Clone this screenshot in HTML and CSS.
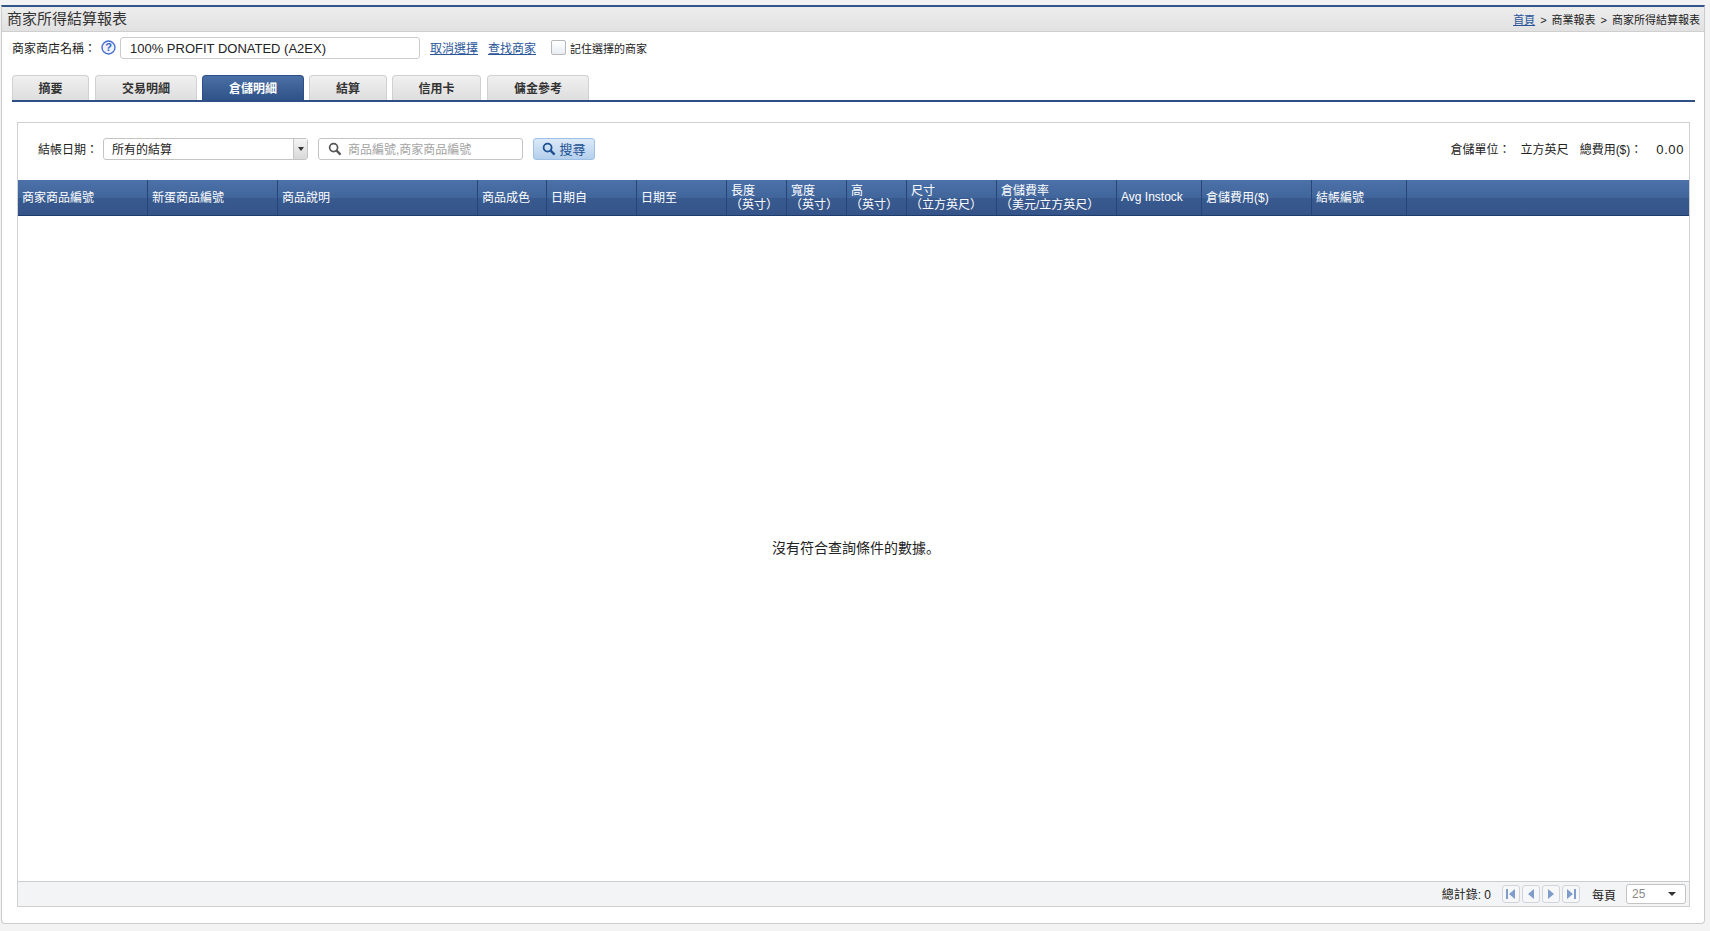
FILE: index.html
```html
<!DOCTYPE html>
<html>
<head>
    <meta charset="utf-8">
    <title>商家所得結算報表</title>
    <link rel="stylesheet" href="styles.css">
</head>
<body>
    <div class="panel">
        <div class="title-bar">
            <h1>商家所得結算報表</h1>
            <div class="crumbs"><a href="#">首頁</a><span>&gt;</span>商業報表<span>&gt;</span>商家所得結算報表</div>
        </div>

        <div class="seller-row">
            <label class="seller-label">商家商店名稱：</label>
            <svg class="help" width="15" height="15" viewBox="0 0 15 15">
                <circle cx="7.5" cy="7.5" r="6.5" fill="#eef2fb" stroke="#4a6fd0" stroke-width="1.4"/>
                <text x="7.5" y="11" text-anchor="middle" class="help-mark">?</text>
            </svg>
            <input class="seller-input" type="text" value="100% PROFIT DONATED (A2EX)">
            <a class="seller-link first" href="#">取消選擇</a>
            <a class="seller-link" href="#">查找商家</a>
            <span class="check"></span>
            <span class="check-label">記住選擇的商家</span>
        </div>

        <div class="tabs">
            <div class="tab tab1">摘要</div>
            <div class="tab tab2">交易明細</div>
            <div class="tab tab3 active">倉儲明細</div>
            <div class="tab tab4">結算</div>
            <div class="tab tab5">信用卡</div>
            <div class="tab tab6">傭金參考</div>
        </div>

        <div class="grid-box">
            <div class="filter-row">
                <label class="filter-label">結帳日期：</label>
                <div class="select">
                    <span class="select-text">所有的結算</span>
                    <span class="select-btn"><i></i></span>
                </div>
                <div class="search-box">
                    <svg width="14" height="14" viewBox="0 0 14 14">
                        <circle cx="5.6" cy="5.6" r="4" fill="none" stroke="#555" stroke-width="1.7"/>
                        <path d="M8.6 8.6 L12.6 12.6" stroke="#555" stroke-width="2.2"/>
                    </svg>
                    <input type="text" placeholder="商品編號,商家商品編號">
                </div>
                <button class="search-btn">
                    <svg width="14" height="14" viewBox="0 0 14 14">
                        <circle cx="5.6" cy="5.6" r="4" fill="none" stroke="#1d4f91" stroke-width="1.8"/>
                        <path d="M8.6 8.6 L12.6 12.6" stroke="#1d4f91" stroke-width="2.3"/>
                    </svg>
                    搜尋
                </button>
                <div class="totals">
                    <span>倉儲單位：</span><span class="unit">立方英尺</span><span class="fee">總費用($)：</span><span class="amount">0.00</span>
                </div>
            </div>

            <div class="grid-head">
                <div class="col w130">商家商品編號</div>
                <div class="col w130">新蛋商品編號</div>
                <div class="col w200">商品說明</div>
                <div class="col w69">商品成色</div>
                <div class="col w90">日期自</div>
                <div class="col w90">日期至</div>
                <div class="col w60 two">長度<br><b>（英寸）</b></div>
                <div class="col w60 two">寬度<br><b>（英寸）</b></div>
                <div class="col w60 two">高<br><b>（英寸）</b></div>
                <div class="col w90 two">尺寸<br><b>（立方英尺）</b></div>
                <div class="col w120 two">倉儲費率<br><b>（美元/立方英尺）</b></div>
                <div class="col w85">Avg Instock</div>
                <div class="col w110">倉儲費用($)</div>
                <div class="col w95">結帳編號</div>
            </div>

            <div class="grid-body"><span>沒有符合查詢條件的數據<span class="stop">。</span></span></div>

            <div class="grid-foot">
                <span class="count">總計錄: 0</span>
                <span class="page-btn"><svg width="12" height="12" viewBox="0 0 12 12"><path d="M1 1h2v10H1zM10 1v10L4 6z"/></svg></span>
                <span class="page-btn"><svg width="12" height="12" viewBox="0 0 12 12"><path d="M9 1v10L3 6z"/></svg></span>
                <span class="page-btn"><svg width="12" height="12" viewBox="0 0 12 12"><path d="M3 1v10l6-5z"/></svg></span>
                <span class="page-btn"><svg width="12" height="12" viewBox="0 0 12 12"><path d="M2 1v10l6-5zM9 1h2v10H9z"/></svg></span>
                <span class="per-page">每頁</span>
                <div class="page-size"><span>25</span><i></i></div>
            </div>
        </div>
    </div>
</body>
</html>
```

FILE: styles.css
```css
html, body {
    height: 100%;
}

body {
    margin: 0;
    padding: 5px 5px 7px 1px;
    box-sizing: border-box;
    background-color: #f3f3f3;
    font-family: "Liberation Sans", "Noto Sans CJK TC", sans-serif;
    font-size: 12px;
    color: #222;
}

a {
    color: #2a5699;
}

.panel {
    height: 100%;
    box-sizing: border-box;
    display: flex;
    flex-direction: column;
    background-color: #fff;
    border: 1px solid #ccc;
    border-top: 2px solid #34558a;
    border-radius: 0 0 4px 4px;
}

.title-bar {
    height: 24px;
    flex: none;
    display: flex;
    align-items: center;
    justify-content: space-between;
    padding: 0 4px 0 5px;
    background: linear-gradient(#ededed, #e1e1e1);
    border-bottom: 1px solid #cfcfcf;
}

h1 {
    margin: 0 0 4px;
    font-size: 15px;
    font-weight: normal;
    color: #333;
}

.crumbs {
    margin-bottom: 1px;
    font-size: 11px;
}

.crumbs span {
    margin: 0 5px;
}

.seller-row {
    height: 31px;
    flex: none;
    display: flex;
    align-items: center;
    padding-left: 10px;
}

.seller-label {
    width: 88px;
}

.help {
    margin-left: 1px;
}

.help-mark {
    font-size: 11px;
    font-weight: bold;
    fill: #3d62c4;
}

.seller-input {
    width: 300px;
    height: 22px;
    box-sizing: border-box;
    margin-left: 4px;
    padding: 2px 9px 0;
    border: 1px solid #ccc;
    border-radius: 3px;
    font-family: inherit;
    font-size: 13px;
    color: #222;
}

.seller-link {
    margin-left: 10px;
}

.check {
    width: 13px;
    height: 13px;
    margin-left: 15px;
    border: 1px solid #b8b8b8;
    border-radius: 2px;
    background: linear-gradient(#fff, #e8edf2);
}

.check-label {
    margin-left: 4px;
    font-size: 11px;
}

.tabs {
    flex: none;
    height: 25px;
    margin: 12px 9px 0 10px;
    display: flex;
    align-items: flex-end;
    border-bottom: 2px solid #2d4f85;
}

.tab {
    height: 25px;
    box-sizing: border-box;
    padding-bottom: 1px;
    display: flex;
    align-items: center;
    justify-content: center;
    border: 1px solid #d0d0d0;
    border-bottom: none;
    border-radius: 4px 4px 0 0;
    background: linear-gradient(#f0f0f0, #dedede);
    font-size: 12px;
    font-weight: bold;
    color: #333;
}

.tab1 { width: 77px; margin-right: 6px; }
.tab2 { width: 102px; margin-right: 5px; }
.tab3 { width: 102px; margin-right: 5px; }
.tab4 { width: 78px; margin-right: 5px; }
.tab5 { width: 89px; margin-right: 6px; }
.tab6 { width: 102px; }

.tab.active {
    border-color: #2d4f85;
    background: linear-gradient(#4a70a6, #2f5288);
    color: #fff;
}

.grid-box {
    flex: 1;
    min-height: 0;
    margin: 20px 14px 16px 15px;
    display: flex;
    flex-direction: column;
    border: 1px solid #d0d0d0;
}

.filter-row {
    height: 57px;
    flex: none;
    box-sizing: border-box;
    display: flex;
    align-items: center;
    padding: 0 0 6px 20px;
}

.filter-label {
    width: 65px;
}

.select {
    width: 205px;
    height: 22px;
    box-sizing: border-box;
    display: flex;
    border: 1px solid #c4c4c4;
    border-radius: 3px;
}

.select-text {
    flex: 1;
    padding-left: 8px;
    line-height: 22px;
}

.select-btn {
    width: 13px;
    display: flex;
    align-items: center;
    justify-content: center;
    border-left: 1px solid #c4c4c4;
    background: linear-gradient(#f4f4f4, #d8d8d8);
}

.select-btn i {
    border-style: solid;
    border-width: 4px 3px 0 3px;
    border-color: #333 transparent transparent transparent;
}

.search-box {
    width: 205px;
    height: 22px;
    box-sizing: border-box;
    margin-left: 10px;
    padding-left: 9px;
    display: flex;
    align-items: center;
    border: 1px solid #c4c4c4;
    border-radius: 3px;
}

.search-box input {
    flex: 1;
    min-width: 0;
    margin-left: 6px;
    padding: 2px 0 0;
    border: none;
    outline: none;
    font-family: inherit;
    font-size: 12px;
}

.search-box input::placeholder {
    color: #a3a3a3;
}

.search-btn {
    width: 62px;
    height: 22px;
    margin-left: 10px;
    padding: 0;
    display: flex;
    align-items: center;
    justify-content: center;
    gap: 3px;
    border: 1px solid #9dc0e6;
    border-radius: 3px;
    background: linear-gradient(#dbe9f8, #b4cfec);
    font-family: inherit;
    font-size: 13px;
    color: #1d4f91;
}

.totals {
    margin-left: auto;
    padding-right: 5px;
    display: flex;
    align-items: baseline;
}

.unit {
    margin-left: 10px;
}

.fee {
    margin-left: 11px;
}

.amount {
    margin-left: 14px;
    font-size: 13px;
    letter-spacing: 0.6px;
}

.grid-head {
    height: 36px;
    flex: none;
    display: flex;
    background: linear-gradient(#4c71a8 0%, #41669c 50%, #385a8f 51%, #35548a 100%);
    border-bottom: 1px solid #1e3c6c;
    box-sizing: border-box;
}

.col {
    box-sizing: border-box;
    flex: none;
    display: flex;
    align-items: center;
    padding: 0 0 2px 4px;
    border-right: 1px solid #25447a;
    color: #fff;
    white-space: nowrap;
    overflow: hidden;
}

.col.two {
    display: block;
    padding: 4px 0 0 4px;
    line-height: 14px;
}

.col b {
    font-weight: normal;
    margin-left: -1px;
}

.w69 { width: 69px; }
.w60 { width: 60px; }
.w85 { width: 85px; }
.w90 { width: 90px; }
.w95 { width: 95px; }
.w110 { width: 110px; }
.w120 { width: 120px; }
.w130 { width: 130px; }
.w200 { width: 200px; }

.grid-body {
    flex: 1;
    box-sizing: border-box;
    padding: 0 0 4px 5px;
    display: flex;
    align-items: center;
    justify-content: center;
    font-size: 14px;
    color: #222;
}

.stop {
    font-family: "Noto Sans CJK JP", sans-serif;
}

.grid-foot {
    height: 25px;
    flex: none;
    box-sizing: border-box;
    display: flex;
    align-items: center;
    justify-content: flex-end;
    padding-right: 3px;
    background-color: #f3f4f6;
    border-top: 1px solid #ccc;
}

.count {
    margin-right: 11px;
    padding-bottom: 2px;
}

.page-btn {
    width: 18px;
    height: 18px;
    box-sizing: border-box;
    margin-right: 2px;
    display: flex;
    align-items: center;
    justify-content: center;
    border: 1px solid #d4d4d8;
    border-radius: 3px;
    background-color: #f6f7f9;
}

.page-btn svg {
    fill: #7f9ccb;
}

.per-page {
    margin-left: 10px;
    margin-right: 10px;
}

.page-size {
    width: 60px;
    height: 20px;
    box-sizing: border-box;
    display: flex;
    align-items: center;
    justify-content: space-between;
    padding: 0 9px 0 5px;
    background-color: #fff;
    border: 1px solid #c4c4c4;
    border-radius: 3px;
    color: #8a8a8a;
}

.page-size i {
    border-style: solid;
    border-width: 4px 4px 0 4px;
    border-color: #333 transparent transparent transparent;
}
```
